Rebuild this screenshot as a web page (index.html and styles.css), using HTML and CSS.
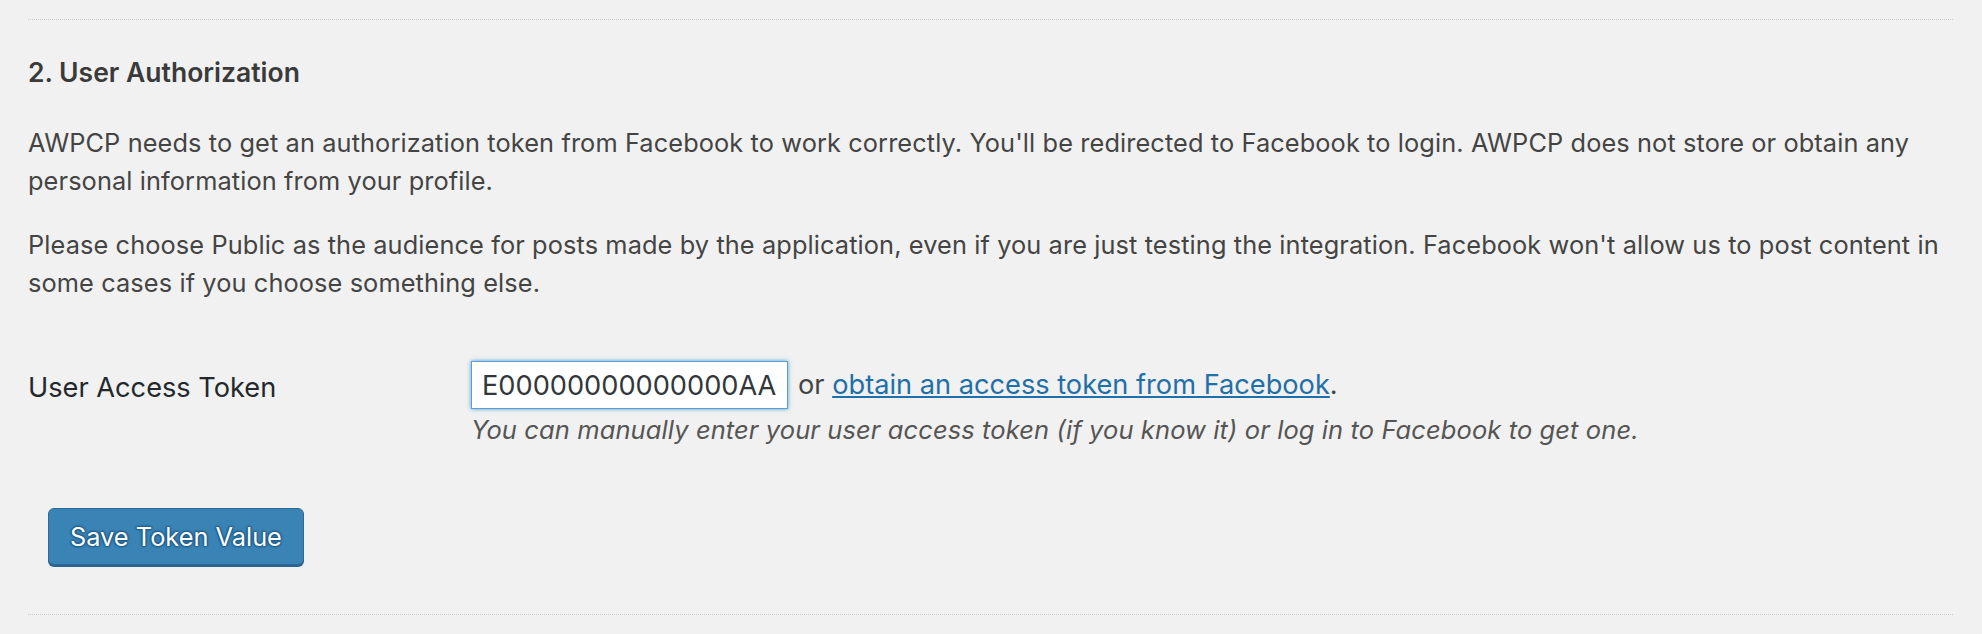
FILE: index.html
```html
<!DOCTYPE html>
<html lang="en">
  <head>
    <meta charset="utf-8">
    <title>Facebook settings</title>
    <link rel="stylesheet" href="styles.css">
  </head>
  <body>
    <div class="wrap">
      <div class="section">
        <h3>2. User Authorization</h3>
        <p>AWPCP needs to get an authorization token from Facebook to work correctly. You'll be redirected to Facebook to login. AWPCP does not store or obtain any personal information from your profile.</p>
        <p>Please choose Public as the audience for posts made by the application, even if you are just testing the integration. Facebook won't allow us to post content in some cases if you choose something else.</p>

        <div class="form-row">
          <label for="user_token" class="row-label">User Access Token</label>
          <div class="row-field">
            <div class="field-line">
              <input type="text" id="user_token" name="user_token" value="E00000000000000AA">
              <span class="or-text">or <a href="#">obtain an access token from Facebook</a>.</span>
            </div>
            <p class="description">You can manually enter your user access token (if you know it) or log in to Facebook to get one.</p>
          </div>
        </div>

        <div class="submit">
          <button type="submit" class="button-primary">Save Token Value</button>
        </div>
      </div>
    </div>
  </body>
</html>
```

FILE: styles.css
```css
html {
  background: #f1f1f1;
}

body {
  margin: 0;
  color: #444;
  font-family: Inter, "Open Sans", sans-serif;
  font-size: 25.35px;
  line-height: 38px;
  letter-spacing: 0.1px;
}

.wrap {
  padding: 19px 0 0 28px;
  width: 1925px;
}

.section {
  border-top: 1px dotted #ccc;
  border-bottom: 1px dotted #ccc;
  padding-bottom: 49px;
}

h3 {
  margin: 34px 0 34px 0;
  font-size: 26.5px;
  line-height: 36px;
  font-weight: 600;
  color: #3a3a3a;
  letter-spacing: 0;
}

p {
  margin: 0 0 26px 0;
}

.form-row {
  display: flex;
  margin-top: 59px;
  font-size: 27.2px;
  letter-spacing: 0;
}

.row-label {
  width: 443px;
  padding-top: 8px;
  color: #23282d;
}

.field-line {
  display: flex;
  align-items: center;
  height: 48px;
}

.field-line input {
  box-sizing: border-box;
  width: 317px;
  height: 48px;
  margin: 0;
  padding: 0 10px;
  border: 1px solid #5b9dd9;
  box-shadow: 0 0 4px rgba(30, 140, 190, 0.8);
  background: #fff;
  color: #32373c;
  font-family: inherit;
  font-size: 27.2px;
  outline: none;
}

.or-text {
  margin-left: 10px;
}

.or-text a {
  color: #1f6fa8;
}

p.description {
  margin: 2px 0 0 0;
  color: #555;
  font-size: 25.5px;
  font-style: italic;
  letter-spacing: 0.1px;
}

.submit {
  margin: 59px 0 0 20px;
}

.button-primary {
  box-sizing: border-box;
  height: 57px;
  padding: 0 21px;
  border: 1px solid #2c6b99;
  border-radius: 6px;
  box-shadow: 0 2px 0 #2a6491;
  background: #3a83b5;
  color: #fff;
  font-family: inherit;
  font-size: 25.35px;
  line-height: 55px;
  text-shadow: 0 -1px 2px #1e5a85, 1px 0 2px #1e5a85, 0 1px 2px #1e5a85, -1px 0 2px #1e5a85;
}
```
